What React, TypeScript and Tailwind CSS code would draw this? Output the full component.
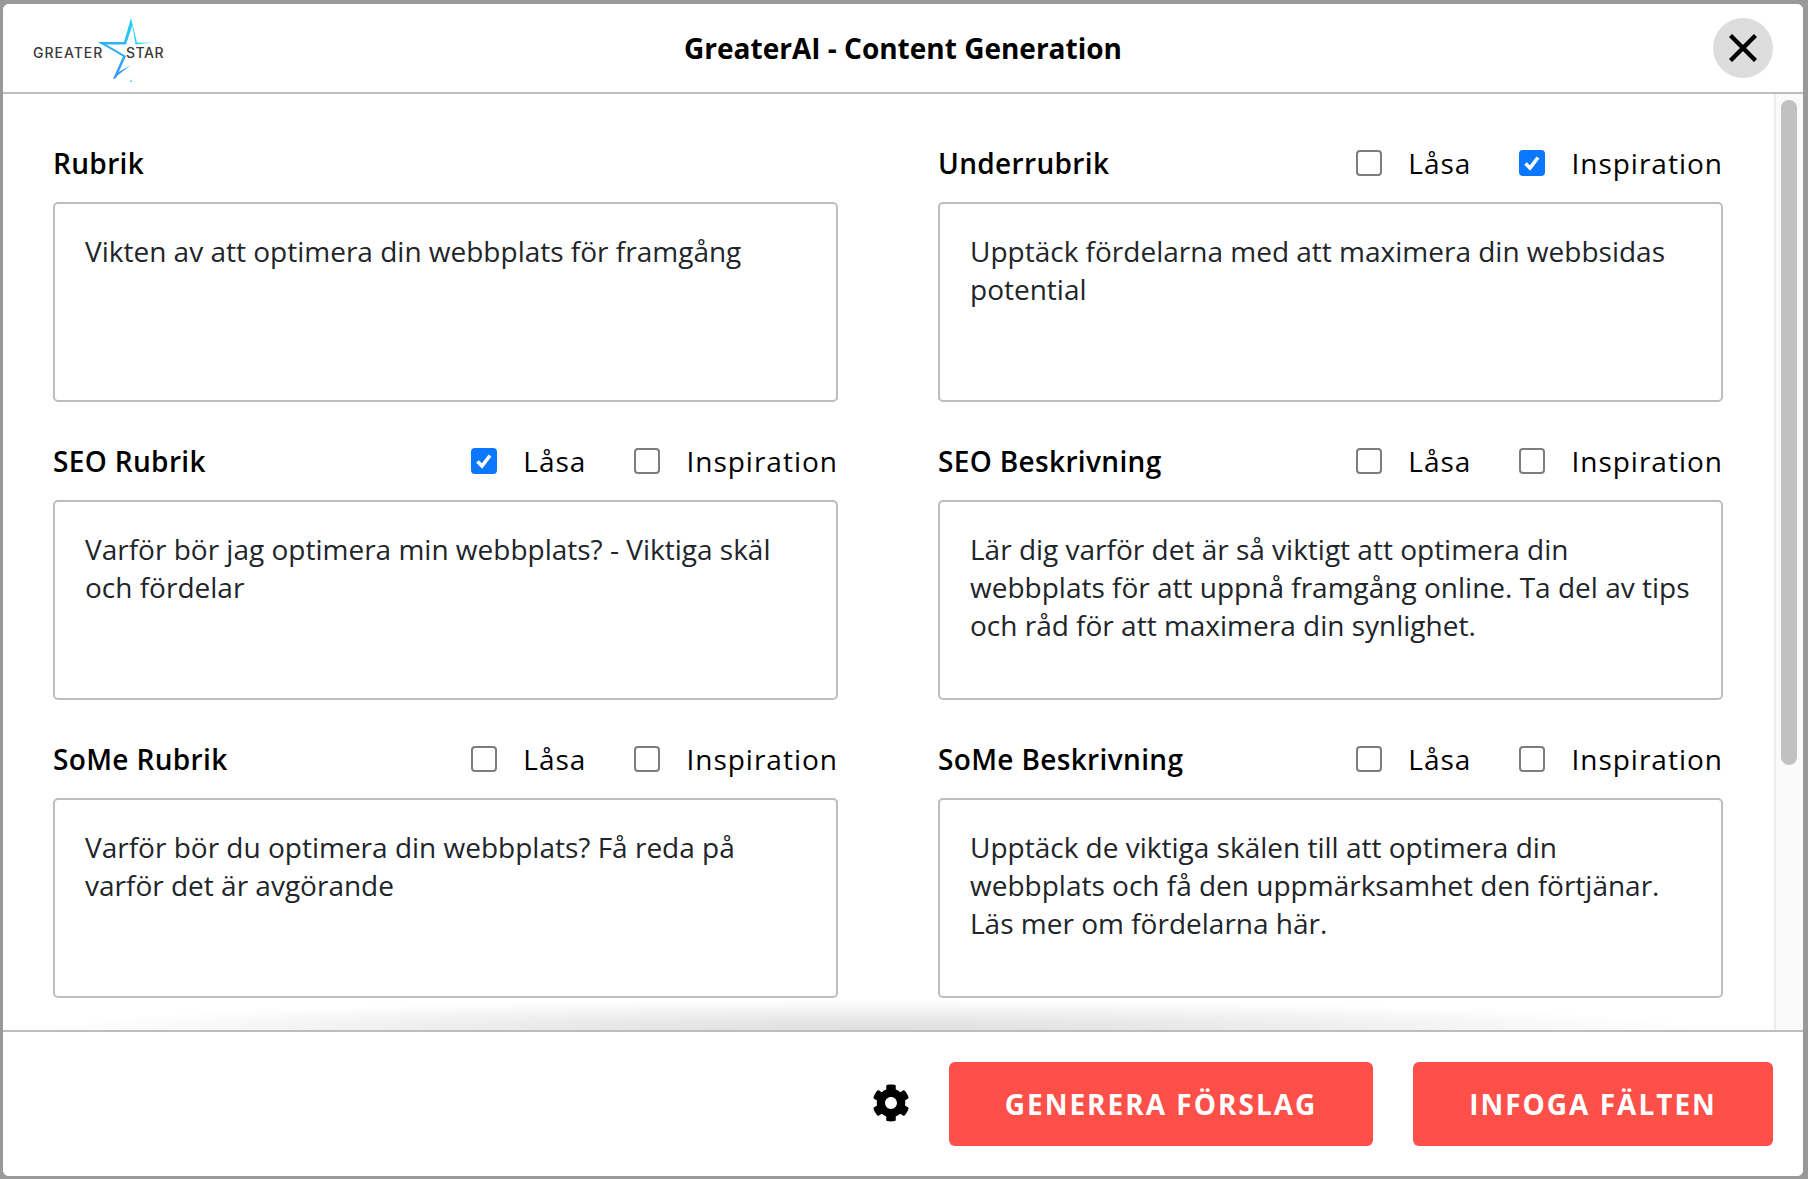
type FieldProps = {
  label: string;
  text: string;
  lock?: boolean;
  inspiration?: boolean;
  noOptions?: boolean;
};

const fields: FieldProps[] = [
  { label: 'Rubrik', text: 'Vikten av att optimera din webbplats för framgång', noOptions: true },
  { label: 'Underrubrik', text: 'Upptäck fördelarna med att maximera din webbsidas potential', inspiration: true },
  { label: 'SEO Rubrik', text: 'Varför bör jag optimera min webbplats? - Viktiga skäl och fördelar', lock: true },
  { label: 'SEO Beskrivning', text: 'Lär dig varför det är så viktigt att optimera din webbplats för att uppnå framgång online. Ta del av tips och råd för att maximera din synlighet.' },
  { label: 'SoMe Rubrik', text: 'Varför bör du optimera din webbplats? Få reda på varför det är avgörande' },
  { label: 'SoMe Beskrivning', text: 'Upptäck de viktiga skälen till att optimera din webbplats och få den uppmärksamhet den förtjänar. Läs mer om fördelarna här.' },
];

function Check({ checked, label }: { checked?: boolean; label: string }) {
  return (
    <label className="flex items-center">
      {checked ? (
        <span className="flex h-[26px] w-[26px] items-center justify-center rounded-[4px] bg-[#0b76fe]">
          <svg width="20" height="20" viewBox="0 0 20 20" fill="none">
            <path d="M3.5 10.5L8 15L16 4.5" stroke="#fff" strokeWidth="3.6" />
          </svg>
        </span>
      ) : (
        <span className="h-[26px] w-[26px] rounded-[4px] border-2 border-[#7d7d7d] bg-white" />
      )}
      <span className="ml-[26px] text-[28px] leading-[38px] tracking-[1px] text-black">{label}</span>
    </label>
  );
}

function Field({ label, text, lock, inspiration, noOptions }: FieldProps) {
  return (
    <div className="flex flex-col">
      <div className="flex h-[98px] items-center justify-between pt-[20px]">
        <span className="text-[28px] font-semibold leading-[38px] tracking-[0.35px] text-black">{label}</span>
        {!noOptions && (
          <div className="flex items-center gap-[48px]">
            <Check checked={lock} label="Låsa" />
            <Check checked={inspiration} label="Inspiration" />
          </div>
        )}
      </div>
      <div className="h-[200px] rounded-[5px] border-2 border-[#bdbdbd] bg-white pl-[30px] pr-[30px] pt-[28px] text-[28px] leading-[38px] text-[#212529]">
        {text}
      </div>
    </div>
  );
}

function Logo() {
  return (
    <div className="relative h-[70px] w-[140px]">
      <svg className="absolute left-[-2px] top-[0px]" width="140" height="70" viewBox="0 0 140 70" fill="none">
        <defs>
          <linearGradient id="star" x1="100" y1="0" x2="60" y2="70" gradientUnits="userSpaceOnUse">
            <stop offset="0" stopColor="#27d2fb" />
            <stop offset="0.55" stopColor="#2fa4f8" />
            <stop offset="1" stopColor="#4a7df2" />
          </linearGradient>
          <linearGradient id="starFade" x1="105" y1="0" x2="130" y2="0" gradientUnits="userSpaceOnUse">
            <stop offset="0" stopColor="#27d2fb" />
            <stop offset="1" stopColor="#27d2fb" stopOpacity="0" />
          </linearGradient>
        </defs>
        <path d="M100 0L93 24L67 24L71 26.5L95 26.5L101.5 7Z" fill="url(#star)" />
        <path d="M100 0L106 24.5L128 24.5L104.5 26.5Z" fill="url(#starFade)" />
        <path d="M67 24L92 38.5L82 61L85 60L95 38L71 24Z" fill="url(#star)" />
        <path d="M82 61L100 47L86 55Z" fill="url(#star)" />
        <path d="M100 61L101 64L99 64Z" fill="#27d2fb" />
      </svg>
      <span className="absolute left-[0px] top-[25px] text-[14px] font-medium leading-[20px] tracking-[1px] text-[#3a3a3a] font-['Inter',sans-serif]">GREATER</span>
      <span className="absolute left-[93px] top-[25px] text-[14px] font-medium leading-[20px] tracking-[0.55px] text-[#3a3a3a] font-['Inter',sans-serif]">STAR</span>
    </div>
  );
}

export default function App() {
  return (
    <div className="flex h-[1179px] w-[1808px] overflow-hidden bg-[#999999] pb-[3px] pl-[3px] pr-[5px] pt-[4px] font-['Open_Sans',sans-serif]">
      <div className="flex w-full flex-col overflow-hidden rounded-[6px] bg-white">
        <header className="relative flex h-[90px] shrink-0 items-center justify-center border-b-2 border-[#bdbdbd] bg-white">
          <div className="absolute left-[30px] top-[14px]">
            <Logo />
          </div>
          <h1 className="text-[28px] font-bold leading-[38px] text-black">GreaterAI - Content Generation</h1>
          <button className="absolute right-[30px] top-[14px] flex h-[60px] w-[60px] items-center justify-center rounded-full bg-[#dddddd]">
            <svg width="28" height="28" viewBox="0 0 28 28" fill="none">
              <path d="M1.5 1.5L26.5 26.5M26.5 1.5L1.5 26.5" stroke="#000" strokeWidth="4.4" />
            </svg>
          </button>
        </header>

        <div className="relative flex min-h-0 flex-1">
          <main className="min-w-0 flex-1 overflow-hidden pl-[50px] pr-[50px] pt-[10px]">
            <div className="grid grid-cols-[785px_785px] gap-x-[100px]">
              {fields.map((f) => (
                <Field key={f.label} {...f} />
              ))}
            </div>
          </main>
          <div className="w-[29px] shrink-0 border-l-2 border-[#ececec] bg-[#fafafa] px-[5px] pt-[6px]">
            <div className="h-[665px] w-[16px] rounded-full bg-[#c1c1c1]" />
          </div>
          <div className="pointer-events-none absolute bottom-0 left-[47px] h-[30px] w-[1650px] bg-[radial-gradient(50%_100%_at_50%_100%,#dedede_0%,#ebebeb_45%,rgba(255,255,255,0)_100%)]" />
        </div>

        <footer className="flex h-[146px] shrink-0 items-start justify-end border-t-2 border-[#bdbdbd] bg-white pr-[30px] pt-[30px]">
          <svg className="mr-[39px] mt-[22px]" width="38" height="38" viewBox="0 0 512 512" fill="#000">
            <path d="M487.4 315.7l-42.6-24.6c4.3-23.2 4.3-47 0-70.2l42.6-24.6c4.9-2.8 7.1-8.6 5.5-14-11.1-35.6-30-67.8-54.7-94.6-3.8-4.1-10-5.1-14.8-2.3L380.8 110c-17.9-15.4-38.5-27.3-60.8-35.1V25.8c0-5.6-3.9-10.5-9.4-11.7-36.7-8.2-74.3-7.8-109.2 0-5.5 1.2-9.4 6.1-9.4 11.7V75c-22.2 7.9-42.8 19.8-60.8 35.1L88.7 85.5c-4.9-2.8-11-1.9-14.8 2.3-24.7 26.7-43.6 58.9-54.7 94.6-1.7 5.4.6 11.2 5.5 14L67.3 221c-4.3 23.2-4.3 47 0 70.2l-42.6 24.6c-4.9 2.8-7.1 8.6-5.5 14 11.1 35.6 30 67.8 54.7 94.6 3.8 4.1 10 5.1 14.8 2.3l42.6-24.6c17.9 15.4 38.5 27.3 60.8 35.1v49.2c0 5.6 3.9 10.5 9.4 11.7 36.7 8.2 74.3 7.8 109.2 0 5.5-1.2 9.4-6.1 9.4-11.7v-49.2c22.2-7.9 42.8-19.8 60.8-35.1l42.6 24.6c4.9 2.8 11 1.9 14.8-2.3 24.7-26.7 43.6-58.9 54.7-94.6 1.5-5.5-.7-11.3-5.6-14.1zM256 336c-44.1 0-80-35.9-80-80s35.9-80 80-80 80 35.9 80 80-35.9 80-80 80z" />
          </svg>
          <button className="h-[84px] w-[424px] rounded-[6px] bg-[#ff4f49] text-[28px] font-bold tracking-[2px] text-white">GENERERA FÖRSLAG</button>
          <button className="ml-[40px] h-[84px] w-[360px] rounded-[6px] bg-[#ff4f49] text-[28px] font-bold tracking-[2px] text-white">INFOGA FÄLTEN</button>
        </footer>
      </div>
    </div>
  );
}
